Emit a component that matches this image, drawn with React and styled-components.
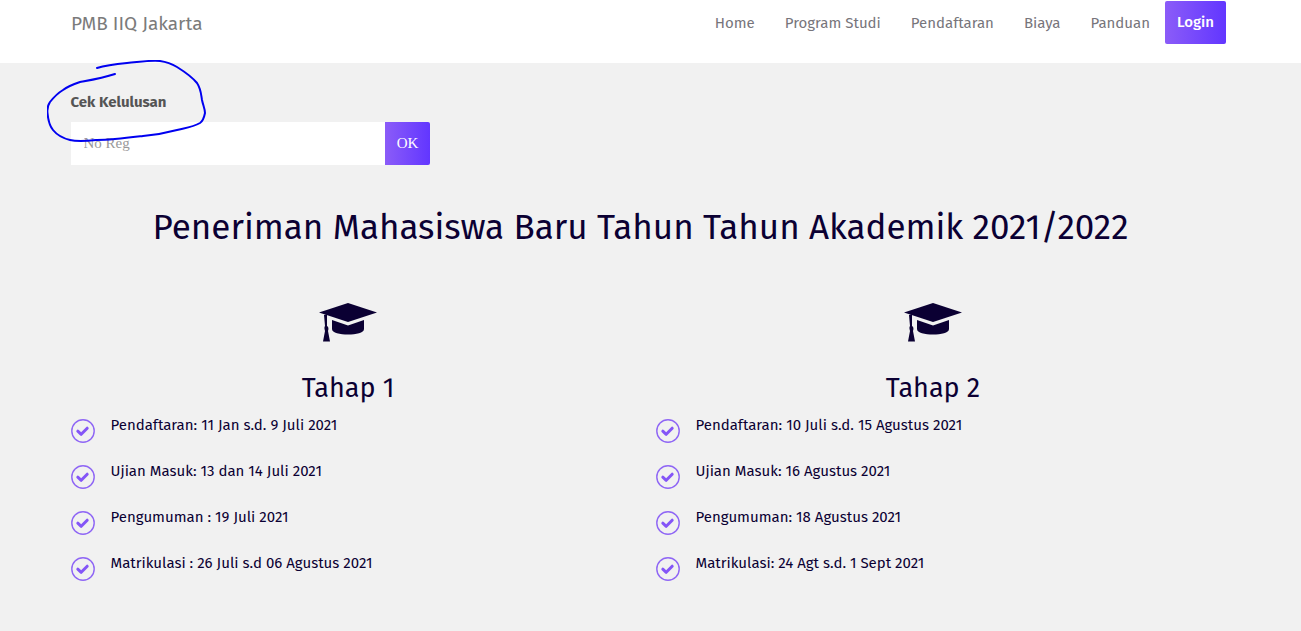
import styled, { createGlobalStyle } from 'styled-components';

const GlobalStyle = createGlobalStyle`
  html, body {
    margin: 0;
    padding: 0;
    background: #f1f1f1;
    font-family: 'Fira Sans', 'Noto Sans', sans-serif;
    overflow: hidden;
  }
`;

const phases = [
  {
    title: 'Tahap 1',
    items: [
      'Pendaftaran: 11 Jan s.d. 9 Juli 2021',
      'Ujian Masuk: 13 dan 14 Juli 2021',
      'Pengumuman : 19 Juli 2021',
      'Matrikulasi : 26 Juli s.d 06 Agustus 2021',
    ],
  },
  {
    title: 'Tahap 2',
    items: [
      'Pendaftaran: 10 Juli s.d. 15 Agustus 2021',
      'Ujian Masuk: 16 Agustus 2021',
      'Pengumuman: 18 Agustus 2021',
      'Matrikulasi: 24 Agt s.d. 1 Sept 2021',
    ],
  },
];

const navLinks = ['Home', 'Program Studi', 'Pendaftaran', 'Biaya', 'Panduan'];

const CapIcon = () => (
  <svg width="60" height="40" viewBox="0 0 60 40">
    <path d="M30 0 L59 9.5 L30 19 L1 9.5 Z" fill="#0b0033" />
    <path d="M14 17 L30 22.5 L46 17 V26 C46 30 38 31.500 30 31.500 C22 31.500 14 30 14 26 Z" fill="#0b0033" />
    <path d="M6 12 L9 11 V23 C11 24 10.500 27 10 28 L12 38.500 H5 L7 28 C6.500 26 6 24 7 23 Z" fill="#0b0033" />
  </svg>
);

const CheckIcon = () => (
  <svg width="24" height="24" viewBox="0 0 24 24">
    <circle cx="12" cy="12" r="11.2" fill="none" stroke="#8f66f5" strokeWidth="1.4" />
    <path d="M6.800 12.200 L10.200 15.300 L16.200 9.200" fill="none" stroke="#8455f7" strokeWidth="3" strokeLinecap="round" strokeLinejoin="round" />
  </svg>
);

const App = () => {
  return (
    <Page>
      <GlobalStyle />
      <Navbar>
        <Brand>PMB IIQ Jakarta</Brand>
        <NavMenu>
          {navLinks.map((link) => (
            <NavLink key={link}>{link}</NavLink>
          ))}
          <LoginButton>Login</LoginButton>
        </NavMenu>
      </Navbar>
      <Content>
        <SearchLabel>Cek Kelulusan</SearchLabel>
        <SearchForm>
          <SearchInput placeholder="No Reg" />
          <SearchButton>OK</SearchButton>
        </SearchForm>
        <Title>Peneriman Mahasiswa Baru Tahun Tahun Akademik 2021/2022</Title>
        <Columns>
          {phases.map((phase) => (
            <Phase key={phase.title}>
              <IconWrap>
                <CapIcon />
              </IconWrap>
              <PhaseTitle>{phase.title}</PhaseTitle>
              <PhaseList>
                {phase.items.map((item) => (
                  <PhaseItem key={item}>
                    <CheckWrap>
                      <CheckIcon />
                    </CheckWrap>
                    <span>{item}</span>
                  </PhaseItem>
                ))}
              </PhaseList>
            </Phase>
          ))}
        </Columns>
      </Content>
      <Scribble width="170" height="90" viewBox="0 0 170 90">
        <path
          d="M50 8 C60 5 70 4 80 3 C92 2 103 0 113 1 C120 2 125 4 130 7 C138 12 145 17 150 23 C154 29 154 34 155 40 C156 45 158 49 158 53 C157 58 156 61 153 63 C146 67 138 68 130 70 C119 73 108 75 96 76 C80 78 65 80 50 80 C40 81 31 82 23 80 C15 78 10 75 6 70 C2 65 1 59 0.500 53 C0 49 1 45 3 42 C7 37 11 33 16 30 C21 26 27 24 33 22 C44 20 56 18 68 14"
          fill="none"
          stroke="#0000f0"
          strokeWidth="2"
          strokeLinecap="round"
        />
      </Scribble>
    </Page>
  );
};

export default App;

const Page = styled.div`
  position: relative;
  height: 631px;
  overflow: hidden;
  background: #f1f1f1;
  color: #0b0033;
`;

const Navbar = styled.div`
  height: 63px;
  background: #fff;
  display: flex;
  justify-content: space-between;
  padding: 1px 75px 0 71px;
  box-sizing: border-box;
`;

const Brand = styled.div`
  font-size: 19px;
  line-height: 45px;
  color: #7b7b7b;
`;

const NavMenu = styled.div`
  display: flex;
  align-items: flex-start;
`;

const NavLink = styled.div`
  font-size: 15px;
  line-height: 44px;
  color: #77757b;
  margin-right: 30px;
  &:nth-child(5) {
    margin-right: 15px;
  }
`;

const LoginButton = styled.div`
  width: 61px;
  height: 43px;
  border-radius: 2px;
  background: linear-gradient(to right, #8b5cf8, #6236ff);
  color: #fff;
  font-size: 15px;
  font-weight: 500;
  line-height: 42px;
  text-align: center;
`;

const Content = styled.div`
  padding: 30px 90.500px 0 70.500px;
`;

const SearchLabel = styled.div`
  font-size: 15px;
  font-weight: 700;
  line-height: 18px;
  color: #555;
`;

const SearchForm = styled.div`
  display: flex;
  width: 359px;
  height: 43px;
  margin-top: 11px;
`;

const SearchInput = styled.input`
  flex: 1;
  min-width: 0;
  border: 0;
  outline: 0;
  background: #fff;
  padding: 0 13px;
  font-family: 'Liberation Serif', serif;
  font-size: 15px;
  &::placeholder {
    color: #999;
  }
`;

const SearchButton = styled.button`
  width: 45px;
  border: 0;
  padding: 0 0 0 1px;
  border-radius: 0 2px 2px 0;
  background: linear-gradient(to right, #8b5cf8, #6236ff);
  color: #fff;
  font-family: 'Liberation Serif', serif;
  font-size: 15px;
`;

const Title = styled.h1`
  margin: 42px 0 0;
  font-size: 35px;
  font-weight: 400;
  line-height: 40px;
  text-align: center;
  white-space: nowrap;
`;

const Columns = styled.div`
  display: grid;
  grid-template-columns: 555px 555px;
  gap: 30px;
  margin-top: 56px;
`;

const Phase = styled.div`
  display: flex;
  flex-direction: column;
`;

const IconWrap = styled.div`
  height: 40px;
  display: flex;
  justify-content: center;
`;

const PhaseTitle = styled.h3`
  margin: 30px 0 0;
  font-size: 27px;
  font-weight: 400;
  line-height: 31px;
  text-align: center;
`;

const PhaseList = styled.ul`
  list-style: none;
  margin: 0;
  padding: 0;
  margin-top: 11px;
`;

const PhaseItem = styled.li`
  display: flex;
  height: 46px;
  font-size: 15px;
  line-height: 20px;
  color: #0b0033;
`;

const CheckWrap = styled.div`
  width: 40px;
  padding-top: 4px;
  svg {
    display: block;
  }
`;

const Scribble = styled.svg`
  position: absolute;
  left: 47px;
  top: 60px;
`;
